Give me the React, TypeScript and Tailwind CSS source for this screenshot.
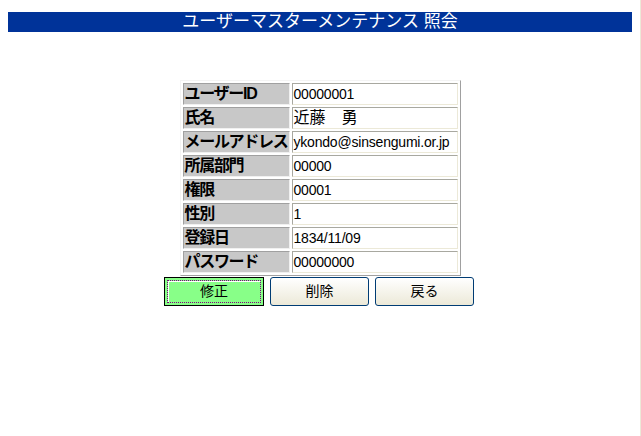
import React from 'react';

const rows: { label: string; value: string; big?: boolean }[] = [
  { label: 'ユーザーID', value: '00000001' },
  { label: '氏名', value: '近藤　勇', big: true },
  { label: 'メールアドレス', value: 'ykondo@sinsengumi.or.jp' },
  { label: '所属部門', value: '00000' },
  { label: '権限', value: '00001' },
  { label: '性別', value: '1' },
  { label: '登録日', value: '1834/11/09' },
  { label: 'パスワード', value: '00000000' },
];

const font = { fontFamily: '"Liberation Sans", "Noto Sans CJK JP", sans-serif' };

export default function App() {
  return (
    <div
      className="w-[641px] h-[436px] bg-white border-r border-[#ece9d8] flex flex-col items-center pt-[12px]"
      style={font}
    >
      <div className="w-[624px] h-[20px] bg-[#003399] text-white text-[17px] leading-[20px] text-center">
        ユーザーマスターメンテナンス 照会
      </div>

      <table className="mt-[48px] w-[281px] table-fixed border-separate border-spacing-[2px] border border-t-[#f4f4f4] border-l-[#f4f4f4] border-r-[#a0a0a0] border-b-[#a0a0a0]">
        <colgroup>
          <col className="w-[107px]" />
          <col className="w-[166px]" />
        </colgroup>
        <tbody>
          {rows.map((r) => (
            <tr key={r.label}>
              <td className="h-[22px] p-0 pl-[1px] bg-[#c8c8c8] border border-t-[#a0a0a0] border-l-[#a0a0a0] border-r-[#f0f0f0] border-b-[#f0f0f0] text-[16px] leading-[20px] font-bold text-black whitespace-nowrap overflow-hidden tracking-[-1.3px]">
                {r.label}
              </td>
              <td
                className={
                  'h-[22px] p-0 pl-[1px] bg-white border border-t-[#a8a8a0] border-l-[#a8a8a0] border-r-[#ece9d8] border-b-[#ece9d8] leading-[20px] text-black whitespace-nowrap overflow-hidden ' +
                  (r.big ? 'text-[16px]' : 'text-[14px] tracking-[-0.2px]')
                }
              >
                {r.value}
              </td>
            </tr>
          ))}
        </tbody>
      </table>

      <div className="flex gap-[6px] mt-[1px] ml-[-2px]">
        <button className="w-[100px] h-[29px] border border-black bg-[#88ff88] p-[2px] text-[14px] text-black">
          <div className="w-full h-full border border-dotted border-[#800080] flex items-center justify-center shadow-[inset_1px_1px_0_#ffffff]">
            修正
          </div>
        </button>
        <button className="w-[99px] h-[29px] rounded-[3px] border border-[#003c74] bg-gradient-to-b from-white to-[#ece9d8] text-[14px] text-black">
          削除
        </button>
        <button className="w-[99px] h-[29px] rounded-[3px] border border-[#003c74] bg-gradient-to-b from-white to-[#ece9d8] text-[14px] text-black">
          戻る
        </button>
      </div>
    </div>
  );
}
